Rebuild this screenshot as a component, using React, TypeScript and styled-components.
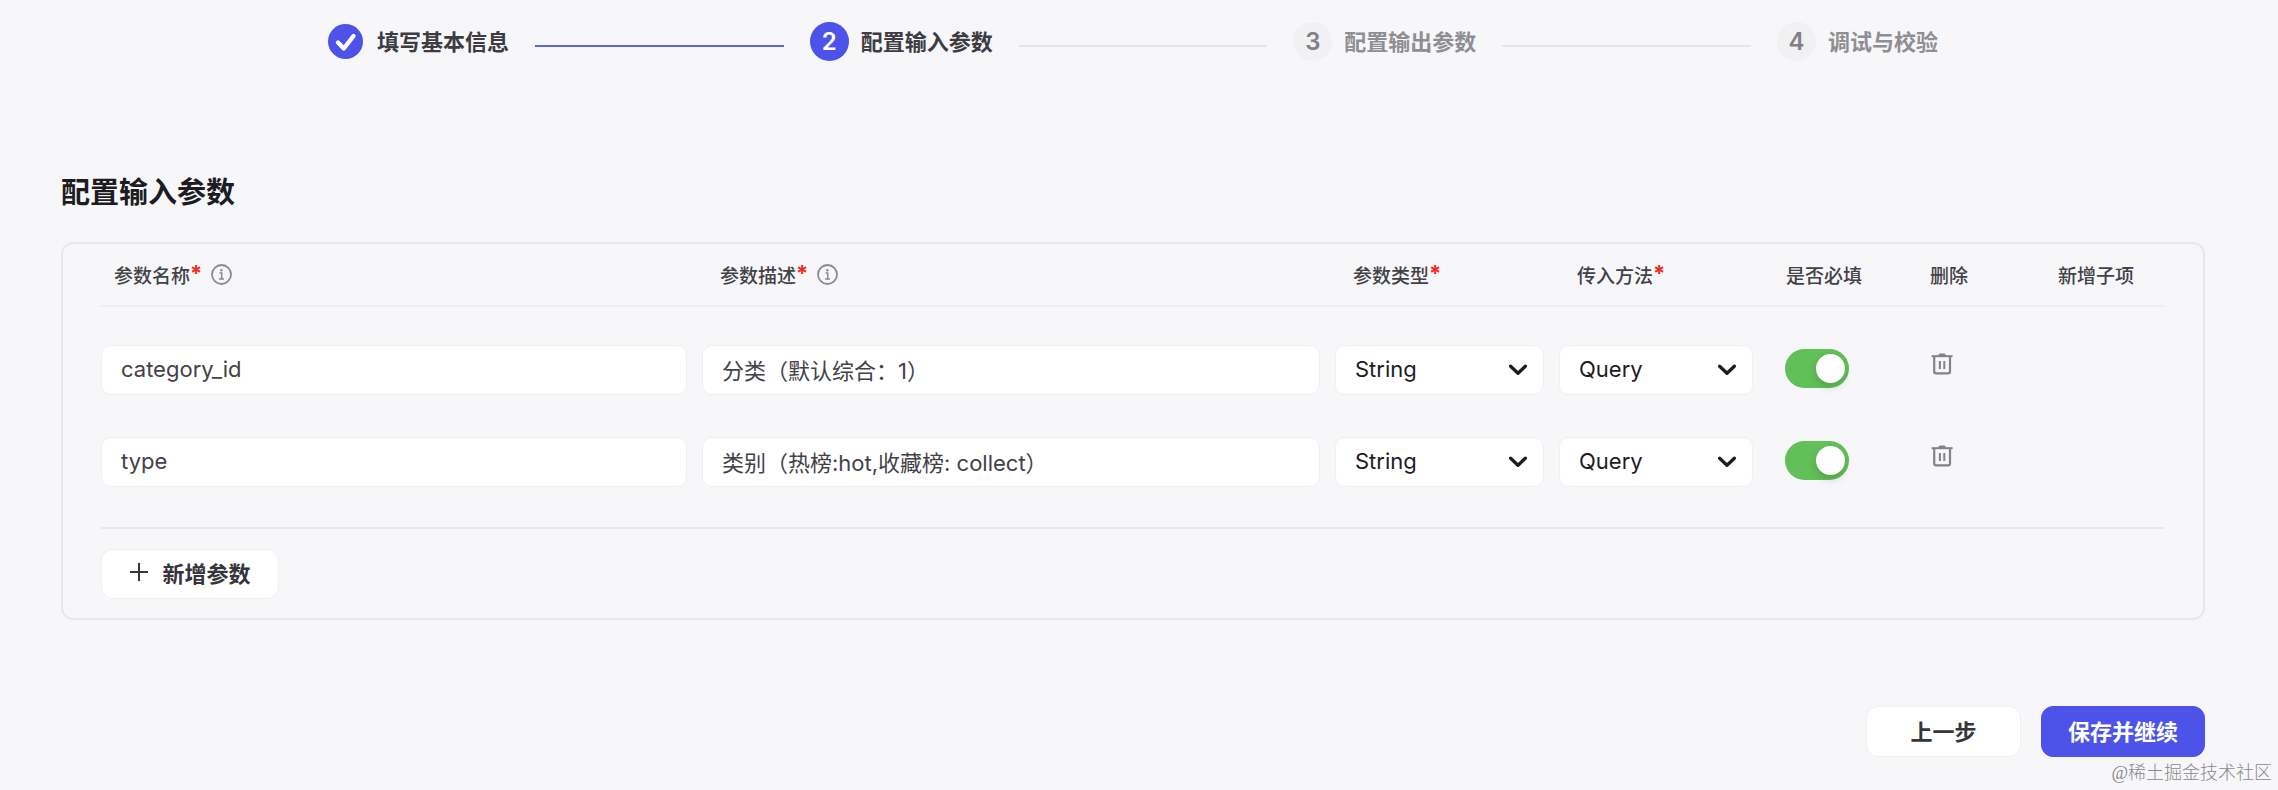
import React, { useState } from "react";
import styled, { createGlobalStyle } from "styled-components";

const GlobalStyle = createGlobalStyle`
  *, *::before, *::after { box-sizing: border-box; }
  body {
    margin: 0;
    background: #f7f7fa;
    color: #1d1c23;
    font-family: Inter, "Noto Sans CJK SC", sans-serif;
  }
  button, input, select { font: inherit; color: inherit; }
`;

const Page = styled.main`
  position: relative;
  min-height: 100vh;
  padding: 22px 73px 32px 61px;
`;

const Stepper = styled.ol`
  display: flex;
  align-items: center;
  gap: 26px;
  list-style: none;
  margin: 0;
  padding: 0 267px 0 265px;
`;

const Step = styled.li<{ $muted?: boolean }>`
  display: flex;
  align-items: center;
  gap: 12px;
  font-size: 22px;
  line-height: 32px;
  font-weight: 600;
  white-space: nowrap;
  color: ${(p) => (p.$muted ? "#8e8e93" : "#3c3c42")};
`;

const Badge = styled.span<{ $active?: boolean }>`
  display: flex;
  align-items: center;
  justify-content: center;
  width: 39px;
  height: 39px;
  border-radius: 50%;
  font-size: 24px;
  font-weight: 600;
  background: ${(p) => (p.$active ? "#4d53e8" : "#f1f1f4")};
  color: ${(p) => (p.$active ? "#fff" : "#808085")};
`;

const DoneBadge = styled.span`
  display: flex;
  align-items: center;
  justify-content: center;
  width: 39px;
  height: 39px;
`;

const StepLine = styled.li<{ $done?: boolean }>`
  flex: 1;
  height: 2px;
  margin-top: 8px;
  background: ${(p) => (p.$done ? "#5d68d8" : "#e5e5e8")};
`;

const Title = styled.h1`
  margin: 112px 0 29px;
  font-size: 29px;
  line-height: 40px;
  font-weight: 600;
`;

const Panel = styled.section`
  border: 2px solid #e8e8ec;
  border-radius: 12px;
  padding: 0 38px 19px;
`;

const ParamTable = styled.table`
  display: block;

  thead, tbody { display: block; }
  tbody { display: grid; gap: 42px; padding: 38px 0 40px; }
  tr {
    display: grid;
    grid-template-columns: 601fr 633fr 224px 209px 144px 128px 125px;
  }
  thead tr { border-bottom: 2px solid #eeeef1; }
`;

const HeadCell = styled.th<{ $first?: boolean }>`
  display: flex;
  align-items: center;
  height: 61px;
  padding: 0 0 0 ${(p) => (p.$first ? 13 : 18)}px;
  font-size: 19px;
  font-weight: 500;
  white-space: nowrap;
  color: #424247;

  svg { margin-left: 9px; }
`;

const Required = styled.span`
  margin-bottom: 4px;
  font-size: 22px;
  line-height: 24px;
  font-weight: 700;
  color: #f22a1c;
`;

const Cell = styled.td<{ $top?: number }>`
  padding: ${(p) => p.$top ?? 0}px 0 0 ${(p) => (p.$top ? 17 : 0)}px;
  margin-right: ${(p) => (p.$top ? 0 : 15)}px;
`;

const Field = styled.input`
  display: block;
  width: 100%;
  height: 50px;
  padding: 0 18px 2px 19px;
  border: 1px solid #efeff2;
  border-radius: 10px;
  background: #fff;
  font-size: 22px;
  color: #424247;
`;

const SelectBox = styled.span`
  display: grid;
  align-items: center;

  select, svg { grid-area: 1 / 1; }
  svg { justify-self: end; margin-right: 16px; pointer-events: none; }
`;

const NativeSelect = styled.select`
  appearance: none;
  width: 100%;
  height: 50px;
  padding: 0 44px 2px 19px;
  border: 1px solid #efeff2;
  border-radius: 10px;
  background: #fff;
  font-size: 22px;
  color: #1d1c23;
`;

const Switch = styled.input`
  appearance: none;
  display: flex;
  align-items: center;
  width: 64px;
  height: 39px;
  margin: 0;
  padding: 0 4px 0 5px;
  border-radius: 20px;
  background: #d5d5da;
  cursor: pointer;

  &::before {
    content: "";
    width: 29px;
    height: 29px;
    border-radius: 50%;
    background: #fff;
    box-shadow: 0 4px 8px rgba(0, 0, 0, 0.16);
  }
  &:checked { background: #62c058; justify-content: flex-end; }
`;

const IconButton = styled.button`
  display: block;
  margin: 0 0 0 2px;
  padding: 0;
  border: 0;
  background: none;
  cursor: pointer;

  svg { display: block; }
`;

const AddBar = styled.div`
  border-top: 2px solid #e9e9ec;
  padding-top: 20px;
`;

const Button = styled.button<{ $kind?: "primary" | "add" }>`
  display: flex;
  align-items: center;
  justify-content: center;
  gap: 13px;
  height: ${(p) => (p.$kind === "add" ? 50 : 51)}px;
  width: ${(p) => (p.$kind === "add" ? 178 : p.$kind === "primary" ? 164 : 155)}px;
  padding: 0 0 4px;
  border: 1px solid ${(p) => (p.$kind === "primary" ? "#4d53e8" : "#f0f0f3")};
  border-radius: 12px;
  background: ${(p) => (p.$kind === "primary" ? "#4d53e8" : "#fff")};
  color: ${(p) => (p.$kind === "primary" ? "#fff" : "#35353b")};
  font-size: 22px;
  font-weight: 600;
  white-space: nowrap;
  cursor: pointer;
`;

const Actions = styled.footer`
  display: flex;
  justify-content: flex-end;
  gap: 20px;
  margin-top: 86px;
`;

const Watermark = styled.span`
  position: absolute;
  right: 6px;
  bottom: 4px;
  font-size: 18px;
  line-height: 26px;
  font-weight: 300;
  font-family: "Liberation Serif", "Noto Sans CJK SC", serif;
  color: #88888d;
`;

const CheckIcon = () => (
  <svg width="35" height="35" viewBox="0 0 35 35" aria-hidden="true">
    <circle cx="17.5" cy="17.5" r="17.5" fill="#4d53e8" />
    <path d="M10 18.5l5.8 6L25.5 12" fill="none" stroke="#fff" strokeWidth="4.4" strokeLinecap="round" strokeLinejoin="round" />
  </svg>
);

const InfoIcon = () => (
  <svg width="21" height="21" viewBox="0 0 21 21" fill="none" stroke="#8a8a8f" aria-hidden="true">
    <circle cx="10.5" cy="10.5" r="9.5" strokeWidth="1.8" />
    <path d="M8.5 9h2.2v6M8 15.1h5" strokeWidth="1.5" />
    <circle cx="10.4" cy="6.2" r="1.2" fill="#8a8a8f" stroke="none" />
  </svg>
);

const ChevronIcon = () => (
  <svg width="20" height="14" viewBox="0 0 20 14" aria-hidden="true">
    <path d="M2.6 3.2l7.4 7 7.4-7" fill="none" stroke="#1d1c23" strokeWidth="3.3" strokeLinecap="round" strokeLinejoin="round" />
  </svg>
);

const TrashIcon = () => (
  <svg width="22" height="22" viewBox="0 0 22 22" fill="none" stroke="#828287" aria-hidden="true">
    <path d="M.6 3.2h21" strokeWidth="2" />
    <path d="M7.4 3V2.2Q7.4.4 9.2.4h3.8q1.8 0 1.8 1.8V3z" fill="#828287" stroke="none" />
    <path d="M3.2 3.4v15.2q0 1.8 1.8 1.8h12.2q1.8 0 1.8-1.8V3.4" strokeWidth="2.2" />
    <path d="M8.9 8v8M13.3 8v8" strokeWidth="2" />
  </svg>
);

const PlusIcon = () => (
  <svg width="20" height="20" viewBox="0 0 20 20" aria-hidden="true">
    <path d="M10 1v18M1 10h18" stroke="#35353b" strokeWidth="2" />
  </svg>
);

const columns = [
  { label: "参数名称", required: true, info: true },
  { label: "参数描述", required: true, info: true },
  { label: "参数类型", required: true },
  { label: "传入方法", required: true },
  { label: "是否必填" },
  { label: "删除" },
  { label: "新增子项" },
];

interface Param {
  id: number;
  name: string;
  desc: string;
}

const initialParams: Param[] = [
  { id: 1, name: "category_id", desc: "分类（默认综合：1）" },
  { id: 2, name: "type", desc: "类别（热榜:hot,收藏榜: collect）" },
];

function Select({ label, options }: { label: string; options: string[] }) {
  return (
    <SelectBox>
      <NativeSelect aria-label={label}>
        {options.map((o) => (
          <option key={o}>{o}</option>
        ))}
      </NativeSelect>
      <ChevronIcon />
    </SelectBox>
  );
}

export default function App() {
  const [params, setParams] = useState(initialParams);

  const addParam = () =>
    setParams((list) => [...list, { id: Date.now(), name: "", desc: "" }]);
  const removeParam = (id: number) =>
    setParams((list) => list.filter((p) => p.id !== id));

  return (
    <>
      <GlobalStyle />
      <Page>
        <Stepper>
          <Step>
            <DoneBadge><CheckIcon /></DoneBadge>
            填写基本信息
          </Step>
          <StepLine $done aria-hidden="true" />
          <Step aria-current="step">
            <Badge $active>2</Badge>
            配置输入参数
          </Step>
          <StepLine aria-hidden="true" />
          <Step $muted>
            <Badge>3</Badge>
            配置输出参数
          </Step>
          <StepLine aria-hidden="true" />
          <Step $muted>
            <Badge>4</Badge>
            调试与校验
          </Step>
        </Stepper>

        <Title>配置输入参数</Title>

        <Panel>
          <ParamTable>
            <thead>
              <tr>
                {columns.map((c, i) => (
                  <HeadCell key={c.label} scope="col" $first={i === 0}>
                    {c.label}
                    {c.required && <Required>*</Required>}
                    {c.info && <InfoIcon />}
                  </HeadCell>
                ))}
              </tr>
            </thead>
            <tbody>
              {params.map((p) => (
                <tr key={p.id}>
                  <Cell><Field aria-label="参数名称" defaultValue={p.name} /></Cell>
                  <Cell><Field aria-label="参数描述" defaultValue={p.desc} /></Cell>
                  <Cell><Select label="参数类型" options={["String", "Integer", "Number", "Boolean"]} /></Cell>
                  <Cell><Select label="传入方法" options={["Query", "Body", "Path", "Header"]} /></Cell>
                  <Cell $top={4}><Switch type="checkbox" role="switch" aria-label="是否必填" defaultChecked /></Cell>
                  <Cell $top={8}>
                    <IconButton type="button" aria-label="删除" onClick={() => removeParam(p.id)}>
                      <TrashIcon />
                    </IconButton>
                  </Cell>
                  <Cell />
                </tr>
              ))}
            </tbody>
          </ParamTable>
          <AddBar>
            <Button type="button" $kind="add" onClick={addParam}>
              <PlusIcon />
              新增参数
            </Button>
          </AddBar>
        </Panel>

        <Actions>
          <Button type="button">上一步</Button>
          <Button type="button" $kind="primary">保存并继续</Button>
        </Actions>

        <Watermark>@稀土掘金技术社区</Watermark>
      </Page>
    </>
  );
}
